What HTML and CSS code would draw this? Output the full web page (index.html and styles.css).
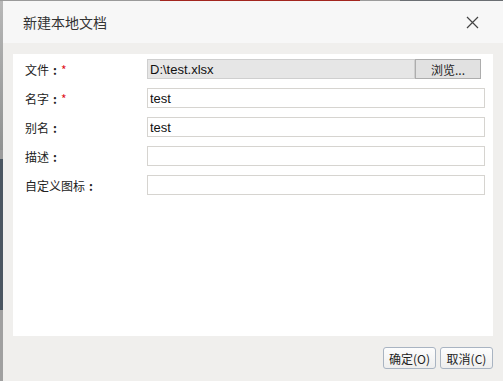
FILE: index.html
```html
<!DOCTYPE html>
<html lang="zh-CN">
<head>
    <meta charset="UTF-8">
    <title>新建本地文档</title>
    <link rel="stylesheet" href="styles.css">
</head>
<body>
    <div class="dialog">
        <div class="dialog-header">
            <span class="dialog-title">新建本地文档</span>
            <span class="close-btn">
                <svg width="13" height="13" viewBox="0 0 13 13">
                    <path d="M1 1 L12 12 M12 1 L1 12" stroke="#444" stroke-width="1.2" fill="none"/>
                </svg>
            </span>
        </div>

        <div class="dialog-body">
            <div class="form">
                <div class="form-row">
                    <label>文件<span class="colon">:</span><span class="required">*</span></label>
                    <div class="file-field">
                        <input type="text" class="input input-readonly" value="D:\test.xlsx" readonly>
                        <button class="browse-btn">浏览...</button>
                    </div>
                </div>
                <div class="form-row">
                    <label>名字<span class="colon">:</span><span class="required">*</span></label>
                    <input type="text" class="input" value="test">
                </div>
                <div class="form-row">
                    <label>别名<span class="colon">:</span></label>
                    <input type="text" class="input" value="test">
                </div>
                <div class="form-row">
                    <label>描述<span class="colon">:</span></label>
                    <input type="text" class="input">
                </div>
                <div class="form-row">
                    <label>自定义图标<span class="colon">:</span></label>
                    <input type="text" class="input">
                </div>
            </div>
        </div>

        <div class="dialog-footer">
            <button class="btn">确定(O)</button>
            <button class="btn">取消(C)</button>
        </div>
    </div>
</body>
</html>
```

FILE: styles.css
```css
* {
    margin: 0;
    padding: 0;
    box-sizing: border-box;
}

body {
    width: 503px;
    height: 381px;
    overflow: hidden;
    font-family: "Noto Sans CJK SC", "Liberation Sans", sans-serif;
    color: #333;
    background:
        linear-gradient(to right, #9a9a9a 0, #9a9a9a 160px, #a3261f 160px, #a3261f 360px, #9c9c9c 360px, #9c9c9c 400px, #6b6f73 400px) top left / 100% 1px no-repeat,
        linear-gradient(to bottom, #b8b8b8 0, #8f9190 150px, #9b9b9b 150px, #9b9b9b 159px, #4b5661 159px, #4b5661 310px, #a0a0a0 310px);
}

.dialog {
    width: 500px;
    height: 380px;
    margin: 1px 0 0 3px;
    background: #f0efed;
    display: flex;
    flex-direction: column;
}

.dialog-header {
    height: 42px;
    flex-shrink: 0;
    background: #f7f7f7;
    display: flex;
    align-items: center;
    justify-content: space-between;
    padding: 0 24px 0 20px;
}

.dialog-title {
    font-size: 14px;
    color: #333;
}

.close-btn {
    display: flex;
    cursor: pointer;
}

.dialog-body {
    padding: 11px 10px 0 10px;
}

.form {
    height: 282px;
    background: #fff;
    padding: 5px 8px 0 12px;
    display: flex;
    flex-direction: column;
    gap: 9px;
}

.form-row {
    display: flex;
    align-items: center;
    height: 20px;
}

.form-row label {
    width: 122px;
    flex-shrink: 0;
    font-size: 12px;
    color: #222;
}

.colon {
    display: inline-block;
    width: 12px;
    text-align: center;
    font-weight: bold;
}

.required {
    color: #e0141e;
}

.input {
    flex: 1;
    height: 20px;
    border: 1px solid #d6d4d0;
    background: #fff;
    padding: 0 2px;
    font-family: "Liberation Sans", Arial, sans-serif;
    font-size: 13px;
    color: #111;
    outline: none;
}

.file-field {
    flex: 1;
    display: flex;
    margin-right: 4px;
}

.input-readonly {
    background: #e6e6e6;
    border-color: #cfcfcf;
}

.browse-btn {
    width: 66px;
    height: 20px;
    border: 1px solid #adadad;
    background: #e1e1e1;
    font-family: "Noto Sans CJK SC", sans-serif;
    font-size: 12px;
    color: #222;
}

.dialog-footer {
    display: flex;
    justify-content: flex-end;
    gap: 4px;
    padding: 11px 10px 0 0;
}

.btn {
    width: 53px;
    height: 22px;
    border: 1px solid #a9b4c2;
    border-radius: 3px;
    background: linear-gradient(#fdfdfd, #eeeeee);
    font-family: "Noto Sans CJK SC", sans-serif;
    font-size: 12px;
    color: #222;
    cursor: pointer;
}
```
